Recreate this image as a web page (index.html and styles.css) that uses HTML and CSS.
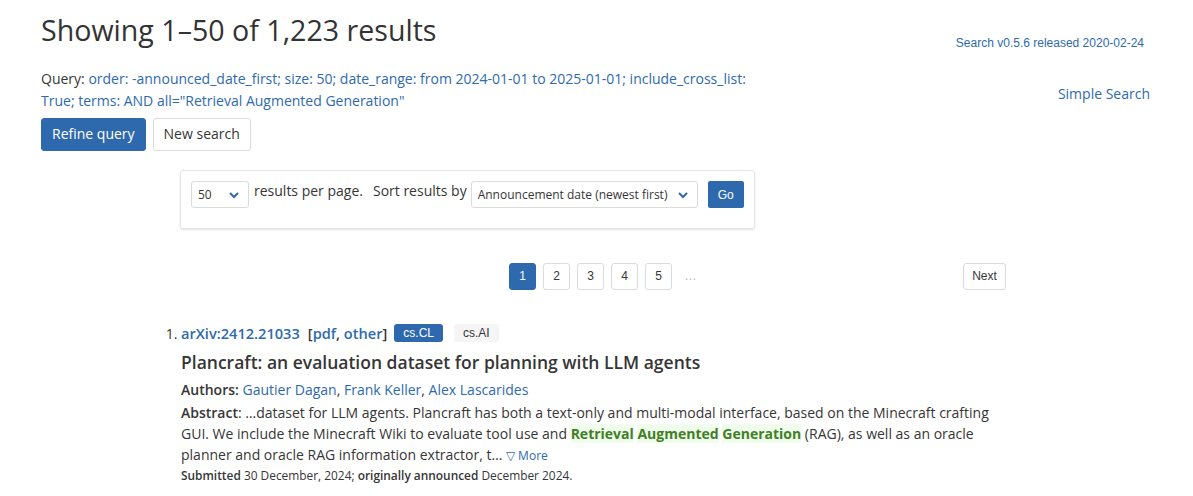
FILE: index.html
```html
<!DOCTYPE html>
<html lang="en">
<head>
  <meta charset="UTF-8" />
  <title>Search | arXiv e-print repository</title>
  <link rel="stylesheet" href="styles.css">
</head>
<body>
  <main class="page">
    <div class="header-row">
      <h1 class="title">Showing 1&ndash;50 of 1,223 results</h1>
      <a class="version" href="#">Search v0.5.6 released 2020-02-24</a>
    </div>

    <div class="query-row">
      <div class="query-col">
        <p class="query">Query: <a href="#">order: -announced_date_first; size: 50; date_range: from 2024-01-01 to 2025-01-01; include_cross_list: True; terms: AND all="Retrieval Augmented Generation"</a></p>
        <div class="buttons">
          <a class="button is-link" href="#">Refine query</a>
          <a class="button" href="#">New search</a>
        </div>
      </div>
      <div class="side-col">
        <a href="#">Simple Search</a>
      </div>
    </div>

    <div class="box">
      <div class="select small">
        <span>50</span>
        <svg class="chev" viewBox="0 0 10 8"><path d="M1 2 L5 6 L9 2" fill="none" stroke="#2e6aad" stroke-width="2"/></svg>
      </div>
      <span class="label">results per page.</span>
      <span class="label sort">Sort results by</span>
      <div class="select wide">
        <span>Announcement date (newest first)</span>
        <svg class="chev" viewBox="0 0 10 8"><path d="M1 2 L5 6 L9 2" fill="none" stroke="#2e6aad" stroke-width="2"/></svg>
      </div>
      <button class="go">Go</button>
    </div>

    <nav class="pagination">
      <ul class="pages">
        <li><a class="page-link current" href="#">1</a></li>
        <li><a class="page-link" href="#">2</a></li>
        <li><a class="page-link" href="#">3</a></li>
        <li><a class="page-link" href="#">4</a></li>
        <li><a class="page-link" href="#">5</a></li>
        <li><span class="ellipsis">&hellip;</span></li>
      </ul>
      <a class="page-link next" href="#">Next</a>
    </nav>

    <ol class="results">
      <li class="result">
        <div class="result-head">
          <a class="arxiv-id" href="#">arXiv:2412.21033</a>
          <span class="formats">[<a href="#">pdf</a>, <a href="#">other</a>]</span>
          <span class="tag primary">cs.CL</span>
          <span class="tag">cs.AI</span>
        </div>
        <p class="result-title">Plancraft: an evaluation dataset for planning with LLM agents</p>
        <p class="authors"><strong>Authors:</strong> <a href="#">Gautier Dagan</a>, <a href="#">Frank Keller</a>, <a href="#">Alex Lascarides</a></p>
        <p class="abstract"><strong>Abstract</strong>: &hellip;dataset for LLM agents. Plancraft has both a text-only and multi-modal interface, based on the Minecraft crafting GUI. We include the Minecraft Wiki to evaluate tool use and <span class="hl">Retrieval</span> <span class="hl">Augmented</span> <span class="hl">Generation</span> (RAG), as well as an oracle planner and oracle RAG information extractor, t&hellip; <a class="more" href="#">&#9661;&nbsp;More</a></p>
        <p class="submitted"><strong>Submitted</strong> 30 December, 2024; <strong>originally announced</strong> December 2024.</p>
      </li>
    </ol>
  </main>
</body>
</html>
```

FILE: styles.css
```css
body {
  margin: 0;
  font-family: "Open Sans", "Liberation Sans", sans-serif;
  font-size: 14px;
  color: #363636;
  background: white;
}
a {
  color: #2e6aad;
  text-decoration: none;
}
p {
  margin: 0;
}
.page {
  padding: 0 43px 0 41px;
}
.header-row {
  display: flex;
  justify-content: space-between;
  align-items: flex-start;
}
.title {
  margin: 9px 0 0;
  font-size: 28.6px;
  font-weight: 400;
  line-height: 42px;
  color: #333;
}
.version {
  font-family: "Liberation Sans", Arial, sans-serif;
  font-size: 12px;
  margin: 36px 6px 0 0;
}
.query-row {
  display: flex;
  justify-content: space-between;
  margin-top: 17px;
}
.query-col {
  width: 712px;
}
.query {
  line-height: 22px;
}
.side-col {
  padding-top: 16px;
}
.buttons {
  display: flex;
  gap: 7px;
  margin-top: 6px;
}
.button {
  display: inline-block;
  padding: 0 10px;
  height: 31px;
  line-height: 29px;
  border: 1px solid #dbdbdb;
  border-radius: 3px;
  color: #363636;
}
.button.is-link {
  background: #2f69ad;
  border-color: #2f69ad;
  color: white;
}
.box {
  display: flex;
  align-items: flex-start;
  margin: 19px 0 0 139px;
  width: 553px;
  height: 37px;
  padding: 10px;
  border: 1px solid #e6e6e6;
  border-radius: 3px;
  box-shadow: 0 1px 2px rgba(0,0,0,0.12);
}
.select {
  display: flex;
  align-items: center;
  justify-content: space-between;
  height: 25px;
  border: 1px solid #dbdbdb;
  border-radius: 3px;
  font-size: 12px;
  padding: 0 9px 0 6px;
  color: #363636;
}
.select.small {
  width: 41px;
}
.select.wide {
  width: 210px;
}
.chev {
  width: 10px;
  height: 8px;
}
.label {
  font-size: 14px;
  line-height: 20px;
  margin-left: 5px;
}
.label.sort {
  margin-left: 10px;
  margin-right: 4px;
}
.go {
  margin-left: 10px;
  height: 27px;
  width: 36px;
  background: #2f69ad;
  border: none;
  border-radius: 2px;
  color: white;
  font-family: "Liberation Sans", Arial, sans-serif;
  font-size: 12px;
  padding: 0;
}
.pagination {
  display: flex;
  justify-content: space-between;
  align-items: center;
  margin: 34px 0 0 468px;
  width: 497px;
}
.pages {
  display: flex;
  gap: 7px;
  list-style: none;
  margin: 0;
  padding: 0;
}
.page-link {
  display: block;
  min-width: 25px;
  height: 25px;
  line-height: 25px;
  text-align: center;
  border: 1px solid #dbdbdb;
  border-radius: 3px;
  font-family: "Liberation Sans", Arial, sans-serif;
  font-size: 12px;
  color: #363636;
}
.page-link.current {
  background: #2f69ad;
  border-color: #2f69ad;
  color: white;
}
.page-link.next {
  padding: 0 8px;
}
.ellipsis {
  display: block;
  width: 27px;
  line-height: 27px;
  text-align: center;
  color: #b5b5b5;
  font-family: "Liberation Sans", Arial, sans-serif;
  font-size: 12px;
  margin-left: -2px;
}
.results {
  margin: 33px 0 0 140px;
  padding: 0;
  width: 820px;
}
.result::marker {
  color: #363636;
}
.result-head {
  display: flex;
  align-items: center;
  line-height: 20px;
  font-size: 14.6px;
}
.arxiv-id {
  font-weight: 600;
}
.formats {
  font-weight: 600;
  margin-left: 8px;
}
.tag {
  font-family: "Liberation Sans", Arial, sans-serif;
  font-size: 12px;
  display: inline-block;
  height: 18px;
  line-height: 18px;
  padding: 0 9px;
  border-radius: 3px;
  background: #f5f5f5;
  margin-left: 11px;
}
.tag.primary {
  background: #2f69ad;
  color: white;
  margin-left: 7px;
}
.result-title {
  font-size: 17.5px;
  font-weight: 600;
  line-height: 28px;
  margin-top: 5px;
  color: #363636;
}
.authors {
  margin-top: 4px;
  line-height: 20px;
}
.authors strong {
  font-weight: 600;
}
.abstract {
  margin-top: 2px;
  line-height: 21px;
}
.abstract strong {
  font-weight: 600;
}
.hl {
  background: #f0fcec;
  color: #3f7f25;
  font-weight: 700;
  line-height: 1;
}
.more {
  font-size: 12px;
  line-height: 1;
}
.submitted {
  font-size: 11.9px;
  line-height: 21px;
}
.submitted strong {
  font-weight: 600;
}
```
